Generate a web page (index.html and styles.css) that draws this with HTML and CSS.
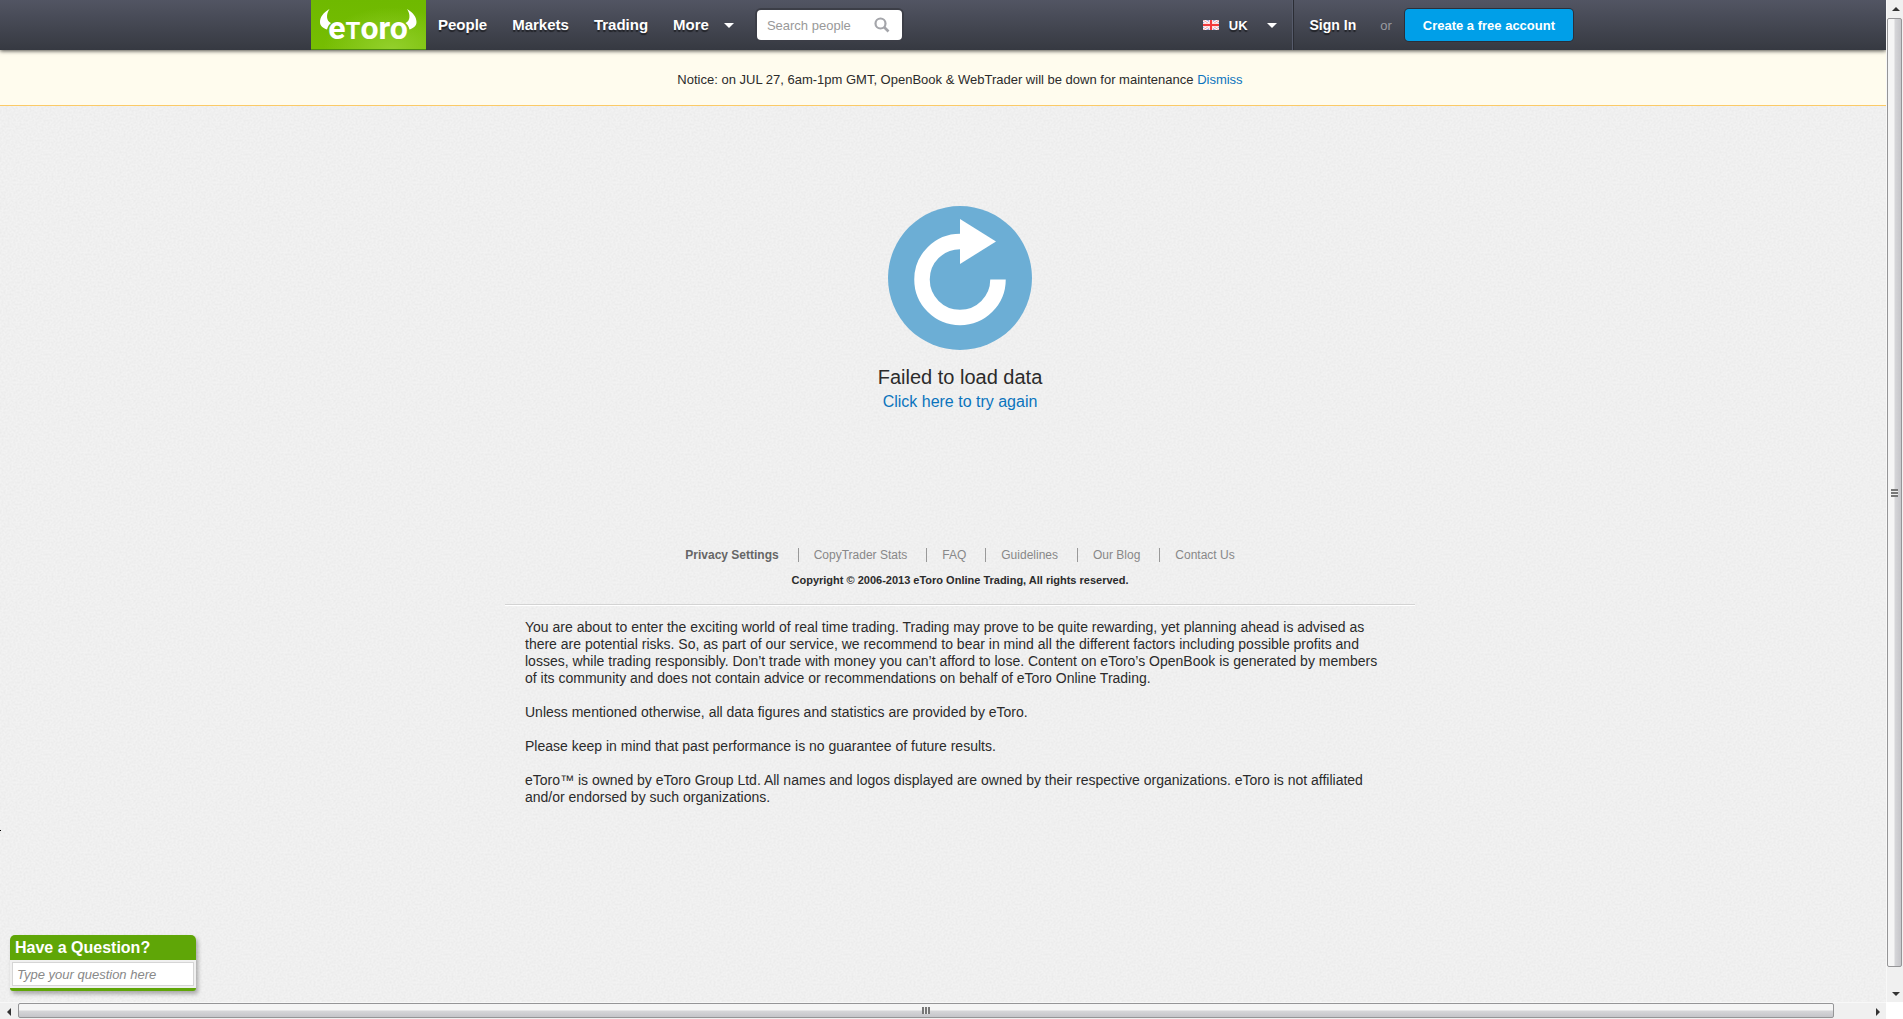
FILE: index.html
```html
<!DOCTYPE html>
<html lang="en">
<head>
<meta charset="utf-8">
<meta name="viewport" content="width=device-width, initial-scale=1">
<title>eToro OpenBook</title>
<link rel="stylesheet" href="styles.css">
</head>
<body>
<div class="window">
  <div class="view">
    <header class="topbar">
      <div class="topbar-inner">
        <a class="logo" href="#" aria-label="eToro home">
          <svg width="115" height="50" viewBox="0 0 115 50" aria-hidden="true">
            <path fill="#fff" d="M18.5 9C12 13 9 17 9 22C9 26 12 28 16 29.500C17 26 18 24.500 20 23C15 21 15 14 18.500 9Z"/>
            <path fill="#fff" d="M96 9C102.500 13 105.500 17 105.500 22C105.500 26 102.500 28 98.500 29.500C97.500 26 96.500 24.500 94.500 23C99.500 21 99.500 14 96 9Z"/>
            <text class="logo-text" x="57" y="39" text-anchor="middle">e<tspan class="logo-cap">T</tspan>oro</text>
          </svg>
        </a>
        <nav class="nav">
          <a href="#">People</a>
          <a href="#">Markets</a>
          <a href="#">Trading</a>
          <a class="has-caret" href="#">More<span class="caret"></span></a>
        </nav>
        <form class="search">
          <input type="text" placeholder="Search people" aria-label="Search people">
          <button type="submit" aria-label="Search">
            <svg width="16" height="16" viewBox="0 0 16 16" aria-hidden="true"><circle cx="6.500" cy="6.500" r="5" fill="none" stroke="#a4a5aa" stroke-width="2.200"/><path d="M10 10l4.500 4.500" stroke="#a4a5aa" stroke-width="2.600" fill="none"/></svg>
          </button>
        </form>
        <div class="account">
          <button class="country" type="button">
            <svg width="16" height="10" viewBox="0 0 16 10" aria-hidden="true"><path fill="#a3a8dc" d="M0 0h16v10H0z"/><path stroke="#fff" stroke-width="3" d="M0 0l16 10M16 0L0 10"/><path stroke="#f3a0a4" d="M0 0l16 10M16 0L0 10"/><path stroke="#fbdfe2" stroke-width="4" d="M8 0v10M0 5h16"/><path stroke="#f2393d" stroke-width="2" d="M8 0v10M0 5h16"/></svg>
            <span>UK</span><span class="caret"></span>
          </button>
          <div class="login">
            <a class="sign-in" href="#">Sign In</a>
            <span class="or">or</span>
            <button class="create" type="button">Create a free account</button>
          </div>
        </div>
      </div>
    </header>
    <div class="page">
      <div class="notice">Notice: on JUL 27, 6am-1pm GMT, OpenBook &amp; WebTrader will be down for maintenance <a href="#">Dismiss</a></div>
      <main class="error">
        <svg width="144" height="144" viewBox="0 0 144 144" aria-hidden="true">
          <circle cx="72" cy="72" r="72" fill="#6caed5"/>
          <path d="M110 73.500A38 38 0 1 1 72 35.500" fill="none" stroke="#fff" stroke-width="15.500"/>
          <path d="M72 13l36 22.500L72 58z" fill="#fff"/>
        </svg>
        <h1>Failed to load data</h1>
        <a href="#">Click here to try again</a>
      </main>
      <footer class="footer">
        <ul class="links">
          <li><a class="strong" href="#">Privacy Settings</a></li>
          <li><a href="#">CopyTrader Stats</a></li>
          <li><a href="#">FAQ</a></li>
          <li><a href="#">Guidelines</a></li>
          <li><a href="#">Our Blog</a></li>
          <li><a href="#">Contact Us</a></li>
        </ul>
        <p class="copyright">Copyright © 2006-2013 eToro Online Trading, All rights reserved.</p>
        <div class="legal">
          <p>You are about to enter the exciting world of real time trading. Trading may prove to be quite rewarding, yet planning ahead is advised as there are potential risks. So, as part of our service, we recommend to bear in mind all the different factors including possible profits and losses, while trading responsibly. Don’t trade with money you can’t afford to lose. Content on eToro’s OpenBook is generated by members of its community and does not contain advice or recommendations on behalf of eToro Online Trading.</p>
          <p>Unless mentioned otherwise, all data figures and statistics are provided by eToro.</p>
          <p>Please keep in mind that past performance is no guarantee of future results.</p>
          <p>eToro™ is owned by eToro Group Ltd. All names and logos displayed are owned by their respective organizations. eToro is not affiliated and/or endorsed by such organizations.</p>
        </div>
      </footer>
    </div>
    <span class="speck"></span>
    <form class="ask">
      <label for="question">Have a Question?</label>
      <div class="ask-body"><input id="question" type="text" placeholder="Type your question here"></div>
    </form>
  </div>
  <div class="bar bar-v" aria-hidden="true">
    <span class="arrow up"></span>
    <div class="thumb"><span class="grip"></span></div>
    <span class="arrow down"></span>
  </div>
  <div class="bar bar-h" aria-hidden="true">
    <span class="arrow left"></span>
    <div class="thumb"><span class="grip"></span></div>
    <span class="arrow right"></span>
  </div>
</div>
</body>
</html>
```
FILE: styles.css
```css
* { box-sizing: border-box; }

body {
  margin: 0;
  font-family: "Liberation Sans", Arial, sans-serif;
  color: #2b2b2b;
  background: #fff;
}

a { color: #0b74bd; text-decoration: none; }
button, input { font-family: inherit; }
button { cursor: pointer; }

/* Window frame: view plus the two scrollbars */
.window {
  display: grid;
  grid-template-columns: minmax(0, 1fr) 17px;
  grid-template-rows: minmax(0, 1fr) 17px;
  height: 100vh;
}

.view {
  position: relative;
  overflow: hidden;
  background-color: #f2f2f2;
  background-image: url("data:image/svg+xml,%3Csvg xmlns='http://www.w3.org/2000/svg' width='200' height='200'%3E%3Cfilter id='n'%3E%3CfeTurbulence type='fractalNoise' baseFrequency='.5' numOctaves='2' stitchTiles='stitch'/%3E%3CfeColorMatrix values='0 0 0 0 0 0 0 0 0 0 0 0 0 0 0 .06 0 0 0 -.02'/%3E%3C/filter%3E%3Crect width='200' height='200' filter='url(%23n)'/%3E%3C/svg%3E");
}

/* Top bar */
.topbar {
  position: relative;
  height: 50px;
  background: linear-gradient(#525563, #363941);
  box-shadow: 0 1px 4px rgba(0, 0, 0, .7);
}

.topbar-inner {
  display: flex;
  align-items: center;
  max-width: 1264px;
  height: 100%;
  margin: 0 auto;
  padding-right: 2px;
}

.logo {
  height: 50px;
  background: radial-gradient(ellipse at 70% 100%, #93d02c, transparent 60%), linear-gradient(#6fb900, #76bd02);
  border-bottom: 1px solid #4c8c10;
}

.logo svg { display: block; }
.logo-text { font: bold 32px Roboto, sans-serif; fill: #fff; }
.logo-cap { font-size: 24px; }

.nav { display: flex; gap: 1px; }

.nav a {
  padding: 0 12px;
  color: #fff;
  font-size: 15px;
  font-weight: bold;
  line-height: 50px;
  text-shadow: 0 2px 1px rgba(0, 0, 0, .5);
}

.has-caret { display: flex; align-items: center; gap: 15px; }

.caret {
  border: 5px solid transparent;
  border-top-color: #fff;
  border-bottom: 0;
}

.search {
  display: flex;
  align-items: center;
  width: 145px;
  height: 30px;
  margin-left: 11px;
  background: #fff;
  border-radius: 4px;
  box-shadow: 0 0 0 2px #3c3e47;
}

.search input {
  flex: 1;
  min-width: 0;
  padding: 0 0 0 10px;
  border: 0;
  background: none;
  font-size: 13px;
}

.search button {
  padding: 0 12px 0 8px;
  border: 0;
  background: none;
  line-height: 0;
}

input::placeholder { color: #999; opacity: 1; }

.account { display: flex; align-items: center; margin-left: auto; }

.country {
  display: flex;
  align-items: center;
  gap: 10px;
  height: 50px;
  padding: 0 16px 0 0;
  border: 0;
  background: none;
  color: #fff;
  font-size: 13px;
  font-weight: bold;
  text-shadow: 0 2px 1px rgba(0, 0, 0, .5);
}

.country .caret { margin-left: 9px; }

.login {
  display: flex;
  align-items: center;
  height: 50px;
  padding-left: 16px;
  border-left: 1px solid #2b2d34;
  box-shadow: -1px 0 #565b6b;
}

.sign-in {
  color: #fff;
  font-size: 14px;
  font-weight: bold;
  text-shadow: 0 2px 1px rgba(0, 0, 0, .5);
}

.or { margin: 0 13px 0 24px; color: #9a9ba1; font-size: 13px; }

.create {
  height: 32px;
  padding: 0 18px;
  border: 0;
  border-radius: 4px;
  background: #009fe8;
  box-shadow: 0 0 0 1px #2b2f3a;
  color: #fff;
  font-size: 13px;
  font-weight: bold;
}

/* The page is wider than the view, so it is cut on the right */
.page { width: calc(100% + 34px); }

.notice {
  padding: 22px 0 18px;
  border-bottom: 1px solid #fbca67;
  background: #fffcee;
  font-size: 13px;
  line-height: 15px;
  text-align: center;
}

.error {
  display: flex;
  flex-direction: column;
  align-items: center;
  padding-top: 100px;
}

.error h1 {
  margin: 15px 0 0;
  font-size: 20px;
  font-weight: normal;
  line-height: 24px;
}

.error a { font-size: 16px; line-height: 26px; }

.footer { max-width: 910px; margin: 133px auto 0; }

.links {
  display: flex;
  justify-content: center;
  margin: 0;
  padding: 0;
  list-style: none;
  font-size: 12px;
  line-height: 14px;
}

.links li + li {
  margin-left: 19px;
  padding-left: 15px;
  border-left: 1px solid #999;
}

.links a { color: #888; }
.links .strong { color: #666; font-weight: bold; }

.copyright {
  margin: 12px 0 17px;
  font-size: 11px;
  font-weight: bold;
  line-height: 13px;
  text-align: center;
}

.legal {
  padding: 14px 24px 14px 20px;
  border-top: 1px solid #d3d3d3;
  box-shadow: inset 0 1px #fff;
  font-size: 14px;
  line-height: 17px;
}

.legal p { margin: 0 0 17px; }

.speck {
  position: absolute;
  left: 0;
  top: 830px;
  width: 1px;
  height: 1px;
  background: #000;
}

/* Question box, floating over the page */
.ask {
  position: absolute;
  left: 10px;
  bottom: 11px;
  width: 186px;
  border-radius: 5px 5px 3px 3px;
  border-bottom: 3px solid #5fa607;
  background: #f0f0f0;
  box-shadow: 2px 3px 4px rgba(0, 0, 0, .3);
}

.ask label {
  display: block;
  padding: 0 5px;
  border-radius: 5px 5px 0 0;
  background: #5fa607;
  color: #fff;
  font-size: 16px;
  font-weight: bold;
  line-height: 25px;
}

.ask-body { padding: 2px; }

.ask input {
  display: block;
  width: 100%;
  height: 24px;
  padding: 0 4px;
  border: 1px solid #d5d5d5;
  background: #fff;
  font-size: 13px;
  font-style: italic;
}

.ask input::placeholder { color: #888; }

/* Scrollbars */
.bar { display: flex; background: #f0f0f0; }
.bar-v { flex-direction: column; border-left: 1px solid #f8f8f8; }
.bar-h { border-top: 1px solid #f8f8f8; }

.arrow {
  display: flex;
  flex: none;
  align-items: center;
  justify-content: center;
  width: 17px;
  height: 17px;
}

.arrow::before { content: ""; border: 4px solid transparent; }
.up::before { border-top: 0; border-bottom-color: #333; }
.down::before { border-bottom: 0; border-top-color: #333; }
.left::before { border-left: 0; border-right-color: #333; }
.right::before { border-right: 0; border-left-color: #333; }

.thumb {
  display: flex;
  flex: 1;
  align-items: center;
  justify-content: center;
  border: 1px solid #959597;
  border-radius: 2px;
}

.bar-v .thumb { margin: 1px 1px 18px 0; background: linear-gradient(90deg, #f5f5f5 45%, #d5d5d8 55%, #c5c5c9); }
.bar-h .thumb { margin: 0 35px 1px 1px; background: linear-gradient(#f5f5f5 45%, #d5d5d8 55%, #c5c5c9); }

.bar-v .grip { width: 7px; height: 8px; background: repeating-linear-gradient(#777 0 2px, #eee 2px 3px); }
.bar-h .grip { width: 8px; height: 7px; background: repeating-linear-gradient(90deg, #777 0 2px, #eee 2px 3px); }
```
